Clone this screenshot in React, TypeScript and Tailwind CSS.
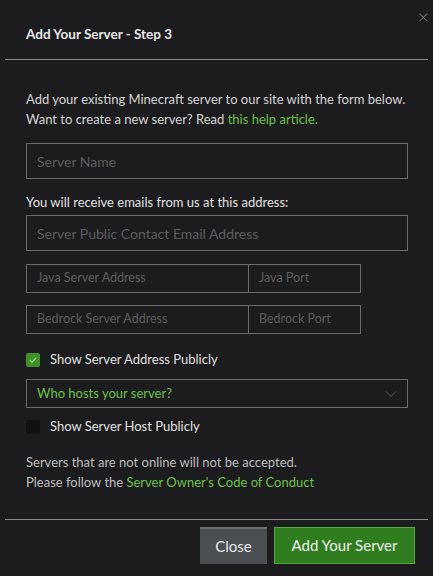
export default function App() {
  const f = { fontFamily: 'Lato, "Noto Sans", sans-serif' };
  return (
    <div style={f} className="w-[433px] h-[576px] bg-[#1c1c1e] text-[#d4d4d4] flex flex-col relative overflow-hidden">
      <div className="absolute right-[4px] top-[6px] text-[#777] text-[20px] leading-none font-light">×</div>
      <div className="shrink-0 h-[60px] mx-[5px] border-b border-[#8a8a8a] flex items-center pl-[21px] pt-[10px]">
        <span className="text-[13.5px] font-bold text-[#e6e6e6]">Add Your Server - Step 3</span>
      </div>
      <div className="shrink-0 px-[26px] pt-[29px] text-[13px]">
        <p className="leading-[20px]">Add your existing Minecraft server to our site with the form below.<br />Want to create a new server? Read <span className="text-[#6cc04a]">this help article.</span></p>
        <div className="mt-[14px] w-[382px] h-[36px] border border-[#6a6a6a] flex items-center px-[10px] text-[14px] text-[#5c5c5c]">Server Name</div>
        <div className="mt-[14px] leading-[18px] text-[#e0e0e0]">You will receive emails from us at this address:</div>
        <div className="mt-[4px] w-[382px] h-[36px] border border-[#6a6a6a] flex items-center px-[10px] text-[14px] text-[#5c5c5c]">Server Public Contact Email Address</div>
        {["Java", "Bedrock"].map((n, i) => (
          <div key={n} className={`${i ? "mt-[12px]" : "mt-[13px]"} w-[335px] h-[29px] border border-[#6a6a6a] flex text-[12.5px] text-[#5c5c5c]`}>
            <div className="w-[222px] border-r border-[#6a6a6a] flex items-center px-[10px]">{n} Server Address</div>
            <div className="flex-1 flex items-center px-[10px]">{n} Port</div>
          </div>
        ))}
        <div className="mt-[18px] flex items-center gap-[10px] h-[16px]">
          <div className="w-[14px] h-[14px] rounded-[2px] bg-[#3e8e2a] flex items-center justify-center">
            <svg width="10" height="10" viewBox="0 0 10 10"><path d="M2 5.2l2 2 4-4.2" stroke="#9fd88a" strokeWidth="1.2" fill="none" /></svg>
          </div>
          <span className="text-[#e0e0e0]">Show Server Address Publicly</span>
        </div>
        <div className="mt-[11px] w-[382px] h-[29px] border border-[#6a6a6a] flex items-center justify-between px-[10px]">
          <span className="text-[#6cc04a]">Who hosts your server?</span>
          <svg width="12" height="8" viewBox="0 0 12 8"><path d="M1 1.5l5 5 5-5" stroke="#555" strokeWidth="1" fill="none" /></svg>
        </div>
        <div className="mt-[11px] flex items-center gap-[10px] h-[16px]">
          <div className="w-[14px] h-[14px] rounded-[2px] bg-[#111]" />
          <span className="text-[#e0e0e0]">Show Server Host Publicly</span>
        </div>
        <p className="mt-[17px] leading-[20px] text-[#bdbdbd]">Servers that are not online will not be accepted.<br />Please follow the <span className="text-[#6cc04a]">Server Owner's Code of Conduct</span></p>
      </div>
      <div className="shrink-0 mt-auto mb-[12px] mx-[5px] border-t border-[#8a8a8a] flex justify-end gap-[7px] pt-[7px] pr-[13px]">
        <button className="w-[67px] h-[37px] bg-[#4b4f53] border-t-2 border-[#6b6f73] text-[15px] text-[#e8e8e8]">Close</button>
        <button className="w-[141px] h-[37px] bg-[#2f7d1f] border border-[#4fa83a] text-[15px] text-[#f0f0f0]">Add Your Server</button>
      </div>
    </div>
  );
}
